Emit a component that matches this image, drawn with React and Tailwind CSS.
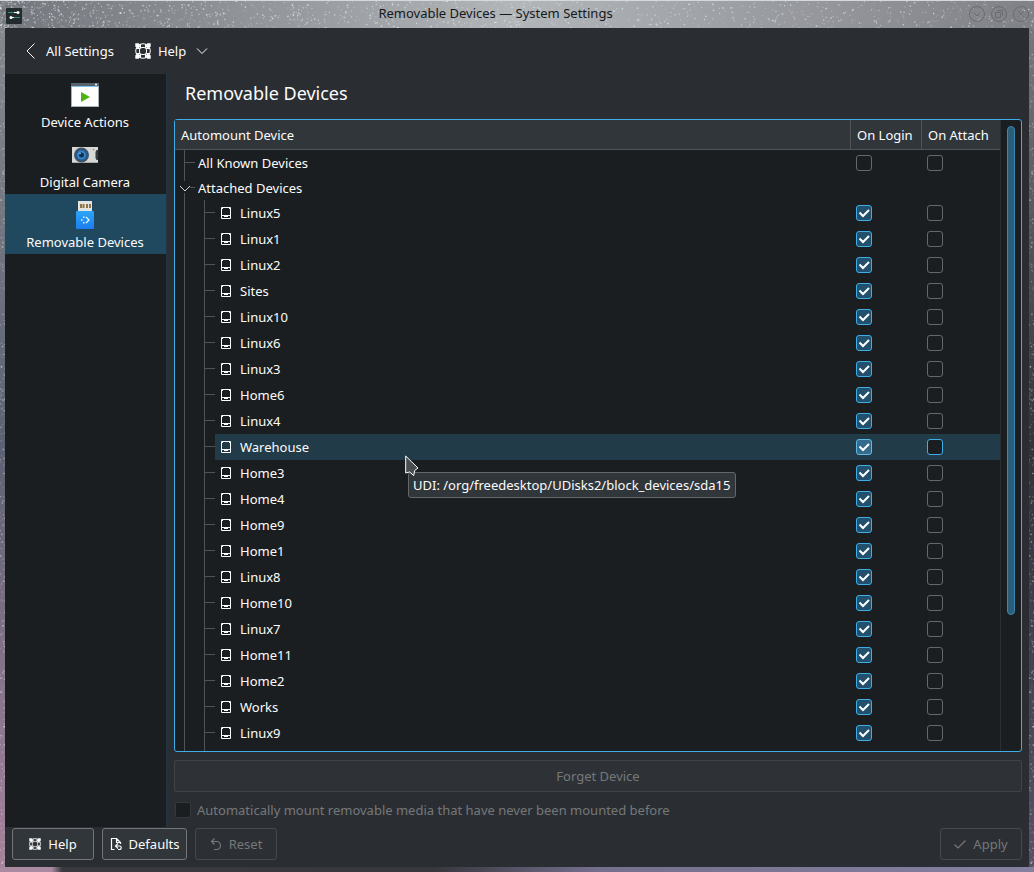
import { useState } from 'react';

const attached = [
  'Linux5', 'Linux1', 'Linux2', 'Sites', 'Linux10', 'Linux6', 'Linux3', 'Home6', 'Linux4', 'Warehouse', 'Home3',
  'Home4', 'Home9', 'Home1', 'Linux8', 'Home10', 'Linux7', 'Home11', 'Home2', 'Works', 'Linux9',
];

// Deterministic speckles for the window decoration
const makeStars = (count, seed) => {
  let s = seed;
  const next = () => {
    s = (s * 16807) % 2147483647;
    return s / 2147483647;
  };
  return Array.from({ length: count }, () => ({ x: next(), y: next(), r: next(), o: next() }));
};

const titleStars = makeStars(1500, 4711);
const edgeStars = makeStars(320, 991);

function TitleTexture() {
  return (
    <svg className="absolute inset-0 w-full h-full" viewBox="0 0 1034 28" preserveAspectRatio="none" aria-hidden="true">
      {titleStars.map((p, i) => (
        <circle key={i} cx={Math.pow(p.x, 1.6) * 1034} cy={p.y * 28} r={0.4 + p.r * 0.5} fill="#f0f6f8" opacity={0.1 + p.o * 0.6} />
      ))}
      <rect width="1034" height="1" fill="#d5d9dc" />
    </svg>
  );
}

function EdgeTexture() {
  return (
    <svg className="w-full h-full" viewBox="0 0 5 840" preserveAspectRatio="none" aria-hidden="true">
      {edgeStars.map((p, i) => (
        <circle key={i} cx={p.x * 5} cy={p.y * 840} r={0.4 + p.r * 0.5} fill="#fff" opacity={0.1 + p.o * 0.35} />
      ))}
    </svg>
  );
}

function SettingsIcon() {
  return (
    <svg className="w-4 h-4" viewBox="0 0 16 16" aria-hidden="true">
      <rect width="16" height="16" rx="1" fill="#232b2e" />
      <path d="M2 4.500h8M7 9.500h7" stroke="#2f8a78" />
      <path d="M8 4.500h3M5 9.500h3" stroke="#fff" />
      <circle cx="12" cy="4.500" r="1.500" fill="#fff" />
      <circle cx="5" cy="9.500" r="1.500" fill="#fff" />
    </svg>
  );
}

function HelpIcon({ className }) {
  return (
    <svg className={className} viewBox="0 0 16 16" fill="none" stroke="currentColor" aria-hidden="true">
      <circle cx="8" cy="8" r="7.300" />
      <rect x="4.500" y="4.500" width="7" height="7" rx="2.500" />
      <path d="M5.500 1v4M10.500 1v4M5.500 11v4M10.500 11v4M1 5.500h4M1 10.500h4M11 5.500h4M11 10.500h4" />
      <path d="M0.300 0.300h3.500L5.500 3.500 3.500 5.500.3 3.800zM15.700.3h-3.500L10.500 3.500l2 2 3.200-1.700zM.3 15.700h3.500L5.500 12.500l-2-2L.3 12.200zM15.700 15.700h-3.500L10.500 12.500l2-2 3.200 1.700z" fill="currentColor" stroke="none" />
    </svg>
  );
}

function ActionsIcon() {
  return (
    <svg className="w-8 h-8" viewBox="0 0 32 32" aria-hidden="true">
      <rect x="2" y="4" width="28" height="24" fill="#aab0b3" />
      <rect x="3" y="5" width="26" height="22" fill="#fff" />
      <rect x="2" y="4" width="28" height="3" fill="#57646d" />
      <rect x="3" y="7" width="26" height="1" fill="#7fc3ea" />
      <circle cx="27" cy="5.500" r="1" fill="#fff" />
      <path d="M12 13v10l9-5z" fill="#4db413" />
    </svg>
  );
}

function CameraIcon() {
  return (
    <svg className="w-8 h-8" viewBox="0 0 32 32" aria-hidden="true">
      <rect x="3" y="8" width="26" height="16" fill="#d6d8d8" />
      <rect x="3" y="23" width="26" height="1" fill="#a9adaf" />
      <path d="M29 11h-1.500L26.500 13v6l1 2H29z" fill="#343a40" />
      <circle cx="12.500" cy="16" r="7.500" fill="#46525c" />
      <circle cx="12.500" cy="16" r="6" fill="#23598f" />
      <circle cx="12.500" cy="16" r="4.500" fill="#3585c8" />
      <circle cx="12.500" cy="16" r="2.500" fill="#12304f" />
      <circle cx="11" cy="14.500" r="0.800" fill="#9fd0f2" />
      <circle cx="24.500" cy="10.500" r="0.800" fill="#e0604f" />
    </svg>
  );
}

function UsbIcon() {
  return (
    <svg className="w-8 h-8" viewBox="0 0 32 32" aria-hidden="true">
      <defs>
        <linearGradient id="usb" x1="0" y1="0" x2="0" y2="1">
          <stop offset="0" stopColor="#2ba6f7" />
          <stop offset="1" stopColor="#1c7df0" />
        </linearGradient>
      </defs>
      <rect x="9" y="2" width="14" height="10" fill="#e3e3e1" />
      <path d="M11 5h2v4h-2zM13.500 5h2v4h-2zM17 5h2v4h-2zM20 5h2v4h-2z" fill="#8f7344" />
      <rect x="7" y="12" width="18" height="18" rx="1" fill="url(#usb)" />
      <path d="M17 18l3 3-3 3" fill="none" stroke="#e6f3ff" strokeWidth="1.300" />
      <path d="M14 17.500h1.500v1.500H14zM12 20.200h1.500v1.500H12zM14 23h1.500v1.500H14z" fill="#e6f3ff" />
    </svg>
  );
}

function DriveIcon() {
  return (
    <svg className="w-3 h-3 shrink-0" viewBox="0 0 12 12" fill="none" stroke="#fcfcfc" aria-hidden="true">
      <path d="M1.500 0.500h9v11h-9z" />
      <path d="M1 8.500h10" />
      <path d="M4 9.500h4M2 1.500h1M9 1.500h1" />
    </svg>
  );
}

function Check({ label, defaultChecked, hovered }) {
  const [on, setOn] = useState(!!defaultChecked);
  return (
    <label className="relative block w-4 h-4">
      <input
        type="checkbox"
        aria-label={label}
        checked={on}
        onChange={() => setOn(!on)}
        className={`block appearance-none w-4 h-4 m-0 rounded-[3px] border
          ${on ? (hovered ? 'bg-[#346a8c] border-[#5fb8e8]' : 'bg-[#22506c] border-[#3daee9]')
            : (hovered ? 'bg-[#1b1e20] border-[#3daee9]' : 'bg-transparent border-[#65686a]')}`}
      />
      {on && (
        <svg className="absolute inset-0 w-4 h-4 pointer-events-none" viewBox="0 0 16 16" fill="none" stroke="#fff" strokeWidth="2" aria-hidden="true">
          <path d="M3.500 7.500L7 11l6-6" />
        </svg>
      )}
    </label>
  );
}

function DeviceRow({ name }) {
  const hovered = name === 'Warehouse';
  const bg = hovered ? 'bg-[#213b48]' : '';
  return (
    <tr className="h-[26px]">
      <td className="p-0">
        <div className="flex h-[26px]">
          <svg className="w-10 h-[26px] shrink-0" viewBox="0 0 40 26" stroke="#505457" aria-hidden="true">
            <path d="M9.500 0v26M29.500 0v26M30 12.500h10" />
          </svg>
          <div className={`flex flex-1 items-center gap-2 pl-[5px] ${bg}`}>
            <DriveIcon />
            <span>{name}</span>
          </div>
        </div>
      </td>
      <td className={`p-0 pl-[6px] ${bg}`}><Check label={`${name} on login`} defaultChecked hovered={hovered} /></td>
      <td className={`p-0 pl-[6px] ${bg}`}><Check label={`${name} on attach`} hovered={hovered} /></td>
    </tr>
  );
}

function DeviceTable() {
  return (
    <div className="relative flex flex-1 min-h-0 rounded-[3px] border border-[#3daee9] bg-[#1b1e20]">
      <div className="flex-1 overflow-hidden">
        <table className="w-full table-fixed border-separate border-spacing-0">
          <colgroup>
            <col />
            <col className="w-[71px]" />
            <col className="w-[79px]" />
          </colgroup>
          <thead>
            <tr className="h-[30px] bg-[#31363b] text-left">
              <th className="p-0 pl-[6px] font-normal border-b border-[#505457]">Automount Device</th>
              <th className="p-0 pl-[6px] font-normal border-b border-l border-[#505457]">On Login</th>
              <th className="p-0 pl-[6px] font-normal border-b border-l border-[#505457]">On Attach</th>
            </tr>
          </thead>
          <tbody>
            <tr className="h-[25px]">
              <td className="p-0">
                <div className="flex items-center h-[25px]">
                  <svg className="w-[23px] h-[25px]" viewBox="0 0 23 25" stroke="#505457" aria-hidden="true">
                    <path d="M9.500 0v25M10 12.500h10" />
                  </svg>
                  All Known Devices
                </div>
              </td>
              <td className="p-0 pl-[6px]"><Check label="All known devices on login" /></td>
              <td className="p-0 pl-[6px]"><Check label="All known devices on attach" /></td>
            </tr>
            <tr className="h-[25px]">
              <td className="p-0">
                <div className="flex items-center h-[25px]">
                  <svg className="w-[23px] h-[25px]" viewBox="0 0 23 25" fill="none" stroke="#505457" aria-hidden="true">
                    <path d="M9.500 0v6M9.500 18v7M15 12.500h5" />
                    <path d="M5 11l5 5 5-5" stroke="#d0d2d3" />
                  </svg>
                  Attached Devices
                </div>
              </td>
              <td className="p-0" />
              <td className="p-0" />
            </tr>
            {attached.map(name => <DeviceRow key={name} name={name} />)}
            {/* Branch lines run on below the last visible row */}
            <tr>
              <td className="p-0" colSpan={3}>
                <svg className="block w-10 h-[26px]" viewBox="0 0 40 26" stroke="#505457" aria-hidden="true">
                  <path d="M9.500 0v26M29.500 0v26" />
                </svg>
              </td>
            </tr>
          </tbody>
        </table>
      </div>
      <div className="flex justify-center w-[21px] border-l border-[#2b2f32] py-[6px]">
        <div className="w-2 h-[79%] rounded-full border border-[#3a87b0] bg-[#2c5d78]" />
      </div>

      {/* Hover tooltip and pointer */}
      <div className="absolute left-[233px] top-[352px] h-[26px] pl-1 pr-[5px] flex items-center whitespace-nowrap rounded-[3px] border border-[#65686a] bg-[#31363b]">
        UDI: /org/freedesktop/UDisks2/block_devices/sda15
      </div>
      <svg className="absolute left-[230px] top-[335px] w-[14px] h-[22px]" viewBox="0 0 14 22" aria-hidden="true">
        <path d="M0.700 1v17l4-1 4 3.500 1-5L13 13z" fill="#4a4d50" stroke="#fcfcfc" strokeLinejoin="round" />
      </svg>
    </div>
  );
}

const sections = [
  { label: 'Device Actions', icon: ActionsIcon },
  { label: 'Digital Camera', icon: CameraIcon },
  { label: 'Removable Devices', icon: UsbIcon, active: true },
];

export default function App() {
  return (
    <div className="flex flex-col h-screen overflow-hidden font-['Noto_Sans',sans-serif] text-[13px] leading-[18px] text-[#fcfcfc] bg-[#5c5c6e]">
      {/* Title bar */}
      <header className="relative flex items-center h-7 shrink-0 px-[5px] bg-linear-to-r from-[#73777d] via-[#b2b6b9] to-[#808187]">
        <TitleTexture />
        <div className="relative flex-1 pt-[3px] pl-px"><SettingsIcon /></div>
        <h1 className="relative pr-11 pb-[2px] text-[#16181a]">Removable Devices — System Settings</h1>
        <div className="relative flex flex-1 justify-end gap-[6px]">
          <button aria-label="Minimize" className="w-4 h-4">
            <svg viewBox="0 0 16 16" fill="none" stroke="#6a6b70" aria-hidden="true"><circle cx="8" cy="8" r="7.500" /><path d="M4.500 6.500L8 10l3.500-3.500" /></svg>
          </button>
          <button aria-label="Maximize" className="w-4 h-4">
            <svg viewBox="0 0 16 16" fill="none" stroke="#6a6b70" aria-hidden="true"><circle cx="8" cy="8" r="7.500" /><path d="M4.500 6.500h5v5h-5zM6.500 4.500h5v5" /></svg>
          </button>
          <button aria-label="Close" className="w-4 h-4">
            <svg viewBox="0 0 16 16" fill="none" stroke="#6c6d72" aria-hidden="true"><circle cx="8" cy="8" r="7.500" /><path d="M5 5l6 6M11 5l-6 6" /></svg>
          </button>
        </div>
      </header>

      <div className="flex flex-1 min-h-0">
        <div className="w-[5px] shrink-0 bg-linear-to-b from-[#85888d] via-[#5d6272] to-[#a5829b]"><EdgeTexture /></div>

        <div className="flex flex-col flex-1 min-w-0 bg-[#2a2e32]">
          {/* Toolbar */}
          <div className="flex items-center h-[46px] shrink-0 pl-5">
            <button className="flex items-center gap-[10px]">
              <svg className="w-[11px] h-4" viewBox="0 0 11 16" fill="none" stroke="currentColor" aria-hidden="true"><path d="M9.500 0.500L2 8l7.500 7.500" /></svg>
              All Settings
            </button>
            <button className="flex items-center gap-[7px] ml-[21px]">
              <HelpIcon className="w-4 h-4" />
              Help
              <svg className="w-3 h-2 ml-[3px]" viewBox="0 0 12 8" fill="none" stroke="currentColor" aria-hidden="true"><path d="M1 1.500l5 5 5-5" /></svg>
            </button>
          </div>

          <div className="flex flex-1 min-h-0">
            <nav className="w-[162px] shrink-0 bg-[#1b1e20] border-r border-[#223744]">
              {sections.map(s => (
                <a key={s.label} href="#" className={`flex flex-col items-center h-[60px] pt-[5px] pr-px gap-[2px] ${s.active ? 'bg-[#20485e]' : ''}`}>
                  <s.icon />
                  {s.label}
                </a>
              ))}
            </nav>
            <main className="flex flex-col flex-1 min-w-0 pl-[7px] pr-[7px] pb-2">
              <h2 className="h-[45px] pt-[7px] pl-[11px] text-[18px] leading-[24px] shrink-0">Removable Devices</h2>
              <DeviceTable />
              <button disabled className="h-8 mt-2 shrink-0 border border-[#404447] rounded-[2px] bg-[#2e3236] text-[#75787a]">Forget Device</button>
              <label className="flex items-center gap-[6px] mt-[9px] pl-px text-[#75787a]">
                <input type="checkbox" disabled className="appearance-none w-4 h-4 m-0 rounded-[2px] border border-[#34383b] bg-[#1b1e20]" />
                Automatically mount removable media that have never been mounted before
              </label>
            </main>
          </div>

          {/* Footer buttons */}
          <footer className="flex gap-[7px] shrink-0 pt-px px-[7px] pb-[7px]">
            <button className="flex items-center justify-center gap-[7px] w-[82px] h-8 mr-px rounded-[3px] border border-[#72767a] bg-[#31363b]">
              <HelpIcon className="w-3 h-3" />
              Help
            </button>
            <button className="flex items-center justify-center gap-[7px] w-[85px] h-8 mr-px rounded-[3px] border border-[#72767a] bg-[#31363b]">
              <svg className="w-3 h-3" viewBox="0 0 12 12" fill="none" stroke="currentColor" strokeWidth="1.200" aria-hidden="true">
                <path d="M4.500 11.500H1.500v-11h5l4 4V6M6.500 0.500v4h4" />
                <path d="M8 5.500L5.500 8 8 10.500M5.500 8H9.500a1.700 1.700 0 0 1 0 3.500H8" />
              </svg>
              Defaults
            </button>
            <button disabled className="flex items-center justify-center gap-[7px] w-[82px] h-8 rounded-[3px] border border-[#45494c] bg-[#2c3034] text-[#75787a]">
              <svg className="w-3 h-3" viewBox="0 0 12 12" fill="none" stroke="currentColor" strokeWidth="1.200" aria-hidden="true">
                <path d="M4.500 0.500L1.500 3.500l3 3M1.500 3.500h5a4 4 0 0 1 0 8H4" />
              </svg>
              Reset
            </button>
            <button disabled className="flex items-center justify-center gap-[7px] w-[82px] h-8 ml-auto rounded-[3px] border border-[#45494c] bg-[#2c3034] text-[#75787a]">
              <svg className="w-3 h-3" viewBox="0 0 12 12" fill="none" stroke="currentColor" strokeWidth="1.200" aria-hidden="true"><path d="M0.500 6.500l3.500 3.500 7.500-7.500" /></svg>
              Apply
            </button>
          </footer>
        </div>

        <div className="w-[5px] shrink-0 bg-linear-to-b from-[#77787e] via-[#33333c] to-[#5a5068]"><EdgeTexture /></div>
      </div>
      <div className="h-[5px] shrink-0 bg-[linear-gradient(to_right,#a98aa0_0,#a98aa0_5%,#3a3940_6%,#38373e_42%,#76708f_58%,#8580a0_100%)]" />
    </div>
  );
}
